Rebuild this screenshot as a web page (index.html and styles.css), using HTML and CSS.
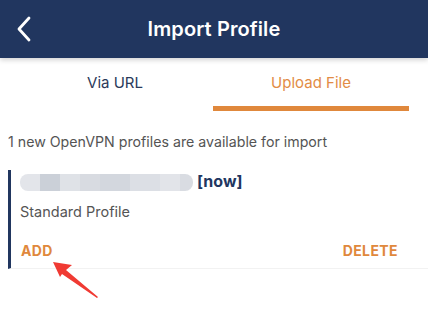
FILE: index.html
```html
<!DOCTYPE html>
<html lang="en">
<head>
<meta charset="utf-8">
<title>Import Profile</title>
<link rel="stylesheet" href="styles.css">
</head>
<body>
<header class="appbar">
  <button class="back" aria-label="Back">
    <svg width="16" height="26" viewBox="0 0 16 26"><path d="M12 2 L2 13 L12 24" fill="none" stroke="#fff" stroke-width="2.8" stroke-linecap="round" stroke-linejoin="round"/></svg>
  </button>
  <h1 class="title">Import Profile</h1>
  <span class="spacer"></span>
</header>
<nav class="tabs">
  <div class="tab">Via URL</div>
  <div class="tab active">Upload File</div>
</nav>
<p class="notice">1 new OpenVPN profiles are available for import</p>
<section class="card">
  <div class="card-head">
    <span class="blurred"></span>
    <span class="stamp">[now]</span>
  </div>
  <div class="card-sub">Standard Profile</div>
  <div class="card-actions">
    <span class="action">ADD</span>
    <span class="action">DELETE</span>
  </div>
</section>
<svg class="arrow" width="428" height="314" viewBox="0 0 428 314">
  <polygon points="53,262 72,265 66,270 98,297 97,298 62,274 60,277" fill="#f03a33"/>
</svg>
</body>
</html>
```
FILE: styles.css
```css
html, body {
  margin: 0;
  padding: 0;
  background: #ffffff;
  font-family: Inter, "Noto Sans", "Liberation Sans", sans-serif;
}
body {
  position: relative;
  width: 428px;
  height: 314px;
  overflow: hidden;
}
.appbar {
  height: 58px;
  background: #21365f;
  display: grid;
  grid-template-columns: 50px 1fr 50px;
  align-items: center;
  box-shadow: 0 2px 5px rgba(0, 0, 0, 0.18);
  position: relative;
  z-index: 1;
}
.back {
  background: none;
  border: 0;
  padding: 0 0 0 17px;
  height: 58px;
  display: flex;
  align-items: center;
  cursor: pointer;
}
.back svg { display: block; }
.title {
  margin: 0;
  text-align: center;
  color: #ffffff;
  font-size: 20px;
  font-weight: 600;
  letter-spacing: 0.1px;
}
.tabs {
  display: grid;
  grid-template-columns: 1fr 1fr;
  padding: 0 19px 0 17px;
}
.tab {
  height: 48px;
  line-height: 50px;
  text-align: center;
  font-size: 15px;
  color: #2a3a5a;
  border-bottom: 5px solid transparent;
}
.tab.active {
  color: #e28c45;
  border-bottom-color: #e0883c;
}
.notice {
  margin: 21px 0 0 8px;
  font-size: 14.2px;
  line-height: 20px;
  color: #545454;
}
.card {
  margin: 18px 0 0 8px;
  border-left: 3px solid #21365f;
  padding: 3px 0 0 9px;
  height: 95px;
  border-bottom: 1px solid #f2f2f2;
}
.card-head {
  display: flex;
  align-items: center;
  gap: 4px;
  height: 18px;
}
.blurred {
  width: 173px;
  height: 17px;
  border-radius: 8px;
  background: linear-gradient(90deg,
    #e3e5ea 0 20px, #cbd0d8 20px 40px, #dfe2e7 40px 60px,
    #d8dbe1 60px 80px, #d3d7de 80px 110px, #dcdfe5 110px 140px,
    #e2e4e9 140px 160px, #d9dce2 160px);
  filter: blur(0.6px);
}
.stamp {
  font-size: 16px;
  font-weight: 700;
  color: #21365f;
  position: relative;
  top: -1px;
}
.card-sub {
  margin-top: 11px;
  font-size: 14.5px;
  line-height: 20px;
  color: #555555;
}
.card-actions {
  display: flex;
  justify-content: space-between;
  margin-top: 20px;
  padding: 0 30px 0 1px;
}
.action {
  font-size: 14px;
  font-weight: 700;
  color: #e0883c;
  letter-spacing: 0.4px;
}
.arrow {
  position: absolute;
  left: 0;
  top: 0;
  pointer-events: none;
}
```
